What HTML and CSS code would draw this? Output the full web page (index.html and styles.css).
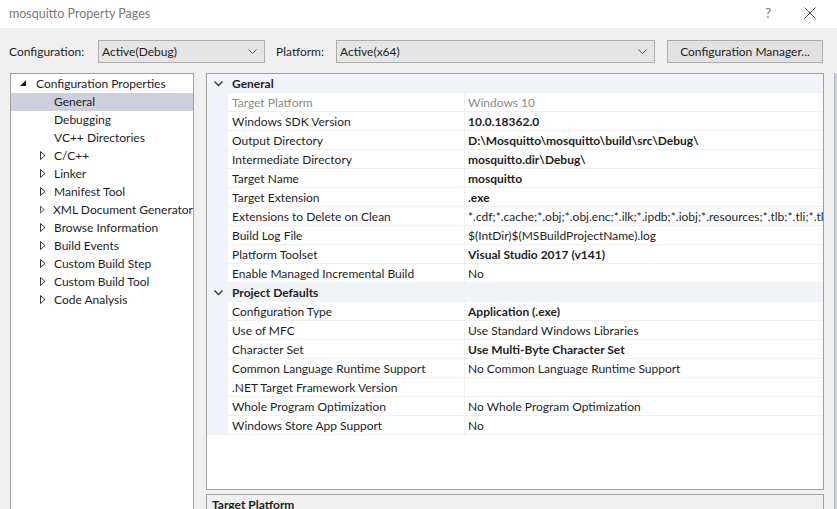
FILE: index.html
```html
<!DOCTYPE html>
<html>
<head>
<meta charset="utf-8">
<link rel="stylesheet" href="styles.css">
</head>
<body>
<div class="window">
  <div class="titlebar">
    <span class="title">mosquitto Property Pages</span>
    <span class="help">?</span>
    <svg class="close" width="12" height="12" viewBox="0 0 12 12"><path d="M0.5 0.5 L11.5 11.5 M11.5 0.5 L0.5 11.5" stroke="#555" stroke-width="1" fill="none"/></svg>
  </div>
  <div class="toolbar">
    <span class="lbl lbl-config">Configuration:</span>
    <div class="combo combo-config"><span>Active(Debug)</span><svg width="9" height="5" viewBox="0 0 9 5"><path d="M0.5 0.5 L4.5 4.5 L8.5 0.5" stroke="#555" fill="none"/></svg></div>
    <span class="lbl lbl-platform">Platform:</span>
    <div class="combo combo-platform"><span>Active(x64)</span><svg width="9" height="5" viewBox="0 0 9 5"><path d="M0.5 0.5 L4.5 4.5 L8.5 0.5" stroke="#555" fill="none"/></svg></div>
    <div class="button">Configuration Manager...</div>
  </div>
  <div class="main">
    <div class="tree">
      <div class="node root"><svg class="exp" width="7" height="7" viewBox="0 0 7 7"><polygon points="6,0 6,6 0,6" fill="#1e1e1e"/></svg><span>Configuration Properties</span></div>
      <div class="node leaf selected"><span>General</span></div>
      <div class="node leaf"><span>Debugging</span></div>
      <div class="node leaf"><span>VC++ Directories</span></div>
      <div class="node child"><svg class="col" width="6" height="9" viewBox="0 0 6 9"><polygon points="0.5,0.5 5,4.5 0.5,8.5" fill="none" stroke="#333"/></svg><span>C/C++</span></div>
      <div class="node child"><svg class="col" width="6" height="9" viewBox="0 0 6 9"><polygon points="0.5,0.5 5,4.5 0.5,8.5" fill="none" stroke="#333"/></svg><span>Linker</span></div>
      <div class="node child"><svg class="col" width="6" height="9" viewBox="0 0 6 9"><polygon points="0.5,0.5 5,4.5 0.5,8.5" fill="none" stroke="#333"/></svg><span>Manifest Tool</span></div>
      <div class="node child"><svg class="col" width="6" height="9" viewBox="0 0 6 9"><polygon points="0.5,0.5 5,4.5 0.5,8.5" fill="none" stroke="#333"/></svg><span>XML Document Generator</span></div>
      <div class="node child"><svg class="col" width="6" height="9" viewBox="0 0 6 9"><polygon points="0.5,0.5 5,4.5 0.5,8.5" fill="none" stroke="#333"/></svg><span>Browse Information</span></div>
      <div class="node child"><svg class="col" width="6" height="9" viewBox="0 0 6 9"><polygon points="0.5,0.5 5,4.5 0.5,8.5" fill="none" stroke="#333"/></svg><span>Build Events</span></div>
      <div class="node child"><svg class="col" width="6" height="9" viewBox="0 0 6 9"><polygon points="0.5,0.5 5,4.5 0.5,8.5" fill="none" stroke="#333"/></svg><span>Custom Build Step</span></div>
      <div class="node child"><svg class="col" width="6" height="9" viewBox="0 0 6 9"><polygon points="0.5,0.5 5,4.5 0.5,8.5" fill="none" stroke="#333"/></svg><span>Custom Build Tool</span></div>
      <div class="node child"><svg class="col" width="6" height="9" viewBox="0 0 6 9"><polygon points="0.5,0.5 5,4.5 0.5,8.5" fill="none" stroke="#333"/></svg><span>Code Analysis</span></div>
    </div>
    <div class="right">
      <div class="grid">
        <div class="cat"><svg class="chev" width="9" height="6" viewBox="0 0 9 6"><path d="M0.5 0.5 L4.5 4.5 L8.5 0.5" stroke="#333" stroke-width="1.3" fill="none"/></svg><span>General</span></div>
        <div class="row"><div class="gut"></div><div class="name ro">Target Platform</div><div class="val ro">Windows 10</div></div>
        <div class="row"><div class="gut"></div><div class="name">Windows SDK Version</div><div class="val b">10.0.18362.0</div></div>
        <div class="row"><div class="gut"></div><div class="name">Output Directory</div><div class="val b">D:\Mosquitto\mosquitto\build\src\Debug\</div></div>
        <div class="row"><div class="gut"></div><div class="name">Intermediate Directory</div><div class="val b">mosquitto.dir\Debug\</div></div>
        <div class="row"><div class="gut"></div><div class="name">Target Name</div><div class="val b">mosquitto</div></div>
        <div class="row"><div class="gut"></div><div class="name">Target Extension</div><div class="val b">.exe</div></div>
        <div class="row"><div class="gut"></div><div class="name">Extensions to Delete on Clean</div><div class="val">*.cdf;*.cache;*.obj;*.obj.enc;*.ilk;*.ipdb;*.iobj;*.resources;*.tlb;*.tli;*.tlh;*.tmp;*.rsp</div></div>
        <div class="row"><div class="gut"></div><div class="name">Build Log File</div><div class="val">$(IntDir)$(MSBuildProjectName).log</div></div>
        <div class="row"><div class="gut"></div><div class="name">Platform Toolset</div><div class="val b">Visual Studio 2017 (v141)</div></div>
        <div class="row"><div class="gut"></div><div class="name">Enable Managed Incremental Build</div><div class="val">No</div></div>
        <div class="cat"><svg class="chev" width="9" height="6" viewBox="0 0 9 6"><path d="M0.5 0.5 L4.5 4.5 L8.5 0.5" stroke="#333" stroke-width="1.3" fill="none"/></svg><span>Project Defaults</span></div>
        <div class="row"><div class="gut"></div><div class="name">Configuration Type</div><div class="val b">Application (.exe)</div></div>
        <div class="row"><div class="gut"></div><div class="name">Use of MFC</div><div class="val">Use Standard Windows Libraries</div></div>
        <div class="row"><div class="gut"></div><div class="name">Character Set</div><div class="val b">Use Multi-Byte Character Set</div></div>
        <div class="row"><div class="gut"></div><div class="name">Common Language Runtime Support</div><div class="val">No Common Language Runtime Support</div></div>
        <div class="row"><div class="gut"></div><div class="name">.NET Target Framework Version</div><div class="val"></div></div>
        <div class="row"><div class="gut"></div><div class="name">Whole Program Optimization</div><div class="val">No Whole Program Optimization</div></div>
        <div class="row"><div class="gut"></div><div class="name">Windows Store App Support</div><div class="val">No</div></div>
      </div>
      <div class="desc"><span>Target Platform</span></div>
    </div>
    <div class="edge"></div>
  </div>
</div>
</body>
</html>
```
FILE: styles.css
```css
html, body {
  margin: 0;
  padding: 0;
}
body {
  width: 837px;
  height: 509px;
  overflow: hidden;
  background: #f0f0f0;
  font-family: Lato, "Noto Sans", sans-serif;
  font-size: 12px;
  color: #1e1e1e;
}
.window {
  display: flex;
  flex-direction: column;
  height: 509px;
}
.titlebar {
  height: 28px;
  background: #ffffff;
  display: flex;
  align-items: center;
  flex: none;
}
.title {
  margin-left: 9px;
  color: #7a7a7a;
  font-size: 12.5px;
  flex: 1;
  margin-top: -2px;
}
.help {
  color: #777;
  font-size: 13px;
  margin-right: 33px;
  margin-top: -2px;
}
.close {
  margin-right: 21px;
  margin-top: -2px;
}
.toolbar {
  display: flex;
  align-items: center;
  margin-top: 12px;
  height: 23px;
  flex: none;
}
.lbl-config {
  margin-left: 9px;
  width: 89px;
}
.lbl-platform {
  margin-left: 11px;
  width: 60px;
}
.combo {
  box-sizing: border-box;
  height: 23px;
  border: 1px solid #adadad;
  background: #e5e5e5;
  display: flex;
  align-items: center;
  justify-content: space-between;
  padding: 0 7px 0 3px;
}
.combo-config { width: 167px; }
.combo-platform { width: 319px; }
.button {
  box-sizing: border-box;
  margin-left: 12px;
  width: 156px;
  height: 23px;
  border: 1px solid #adadad;
  background: #e1e1e1;
  display: flex;
  align-items: center;
  justify-content: center;
}
.main {
  display: flex;
  margin-top: 10px;
  flex: 1;
  min-height: 0;
}
.tree {
  box-sizing: border-box;
  margin-left: 10px;
  width: 184px;
  height: 460px;
  border: 1px solid #a0a0a0;
  background: #ffffff;
  padding-top: 1px;
  flex: none;
}
.node {
  height: 18px;
  display: flex;
  align-items: center;
  white-space: nowrap;
}
.node span {
  margin-top: -2px;
}
.node.root .exp {
  margin-left: 9px;
  margin-right: 9px;
  margin-top: -1px;
}
.node.leaf span {
  margin-left: 43px;
}
.node.child .col {
  margin-left: 29px;
  margin-right: 8px;
  margin-top: -1px;
}
.node.selected {
  background: #cdd0dc;
}
.right {
  margin-left: 12px;
  width: 618px;
  display: flex;
  flex-direction: column;
  flex: none;
}
.grid {
  box-sizing: border-box;
  height: 417px;
  border: 1px solid #a0a0a0;
  background: #ffffff;
  overflow: hidden;
  flex: none;
}
.cat {
  height: 19px;
  background: #f0f4f9;
  display: flex;
  align-items: center;
  font-weight: bold;
}
.cat span {
  margin-top: -1px;
}
.cat .chev {
  margin-left: 7px;
  margin-right: 9px;
}
.row {
  height: 19px;
  display: flex;
  white-space: nowrap;
}
.gut {
  width: 21px;
  background: #f0f4f9;
  flex: none;
}
.name {
  box-sizing: border-box;
  width: 237px;
  padding-left: 4px;
  display: flex;
  align-items: center;
  border-bottom: 1px solid #f0f0f0;
  border-right: 1px solid #f0f0f0;
  flex: none;
}
.val {
  flex: 1;
  min-width: 0;
  padding-left: 3px;
  display: flex;
  align-items: center;
  overflow: hidden;
  border-bottom: 1px solid #f0f0f0;
}
.ro {
  color: #8a8a8a;
}
.b {
  font-weight: bold;
}
.desc {
  box-sizing: border-box;
  margin-top: 4px;
  height: 40px;
  border: 1px solid #a0a0a0;
  background: #f0f0f0;
  padding: 2px 5px;
  font-weight: bold;
  flex: none;
}
.edge {
  margin-left: 10px;
  width: 3px;
  border-left: 1px solid #b0b0b0;
  background: #cfd3da;
  flex: 1;
}
```
